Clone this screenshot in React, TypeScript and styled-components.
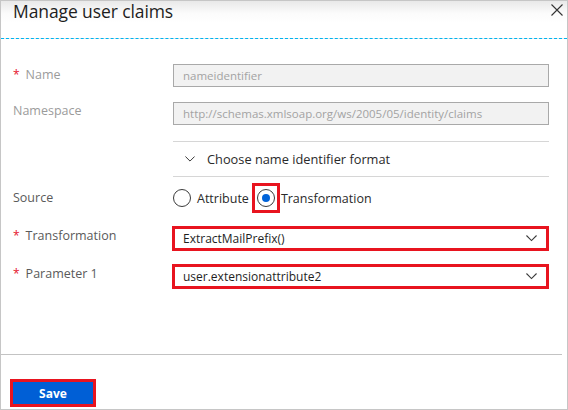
import React from 'react';
import styled, { createGlobalStyle } from 'styled-components';

const GlobalStyle = createGlobalStyle`
  html, body {
    margin: 0;
    padding: 0;
    background: #fff;
  }
  body {
    font-family: 'Open Sans', 'Noto Sans', sans-serif;
    color: #333;
  }
  * {
    box-sizing: border-box;
  }
`;

const Panel = styled.div`
  position: relative;
  width: 568px;
  height: 410px;
  border: 1px solid #c6c6c6;
  display: flex;
  flex-direction: column;
  background: #fff;
  overflow: hidden;
`;

const Header = styled.div`
  height: 38px;
  flex: none;
  padding-left: 12px;
  background: linear-gradient(#e9e9e9 0px, #fbfbfb 12px, #fff 22px);
  border-bottom: 1px dashed #00b4f0;
`;

const Title = styled.h1`
  margin: 0;
  font-size: 17.5px;
  font-weight: 400;
  line-height: 21px;
  color: #1e1e1e;
  letter-spacing: -0.1px;
`;

const CloseButton = styled.button`
  position: absolute;
  top: 2px;
  right: 3px;
  width: 14px;
  height: 14px;
  padding: 0;
  border: none;
  background: none;
  display: flex;
  align-items: center;
  justify-content: center;
  cursor: pointer;
`;

const Body = styled.div`
  flex: 1;
  padding: 25px 18px 0 12px;
  display: flex;
  flex-direction: column;
`;

const Row = styled.div<{ $mt?: number; $h?: number }>`
  display: flex;
  align-items: flex-start;
  margin-top: ${(p) => p.$mt ?? 0}px;
  min-height: ${(p) => p.$h ?? 24}px;
`;

const Label = styled.div<{ $muted?: boolean; $pt?: number }>`
  width: 160px;
  flex: none;
  font-size: 12.5px;
  line-height: 16px;
  padding-top: ${(p) => p.$pt ?? 3}px;
  color: ${(p) => (p.$muted ? '#9b9b9b' : '#5a5a5a')};
`;

const Star = styled.span`
  color: #e5142a;
  margin-right: 6px;
  font-size: 12px;
`;

const Control = styled.div`
  flex: 1;
  display: flex;
  align-items: center;
`;

const ReadOnlyInput = styled.div`
  width: 100%;
  height: 23px;
  border: 1px solid #a9a9a9;
  background: #f2f2f2;
  color: #a3a3a3;
  font-size: 11.5px;
  line-height: 21px;
  padding-left: 9px;
  white-space: nowrap;
`;

const Expander = styled.div`
  width: 100%;
  height: 36px;
  border-top: 1px solid #d6d6d6;
  border-bottom: 1px solid #d6d6d6;
  display: flex;
  align-items: center;
  padding-left: 12px;
  font-size: 12.8px;
  color: #2a2a2a;
  gap: 12px;
`;

const RadioGroup = styled.div`
  display: flex;
  align-items: center;
  height: 30px;
`;

const RadioItem = styled.label`
  display: flex;
  align-items: center;
  font-size: 12.5px;
  color: #2a2a2a;
  gap: 6px;
  margin-right: 7px;
`;

const RadioFrame = styled.span<{ $highlight?: boolean }>`
  display: inline-flex;
  align-items: center;
  justify-content: center;
  width: ${(p) => (p.$highlight ? '28px' : '18px')};
  height: ${(p) => (p.$highlight ? '30px' : '18px')};
  border: ${(p) => (p.$highlight ? '3px solid #e8141f' : 'none')};
  margin-left: ${(p) => (p.$highlight ? '-4px' : '0')};
  margin-right: ${(p) => (p.$highlight ? '-5px' : '0')};
`;

const RadioCircle = styled.span<{ $checked?: boolean }>`
  width: 18px;
  height: 18px;
  border-radius: 50%;
  border: 1px solid #3b3b3b;
  background: #fff;
  display: flex;
  align-items: center;
  justify-content: center;

  &::after {
    content: '';
    width: 8px;
    height: 8px;
    border-radius: 50%;
    background: ${(p) => (p.$checked ? '#0063d9' : 'transparent')};
  }
`;

const Select = styled.div`
  width: calc(100% + 2px);
  margin-left: -1px;
  height: 25px;
  border: 3px solid #e8141f;
  display: flex;
  align-items: center;
  justify-content: space-between;
  padding: 0 9px 0 8px;
  font-size: 12px;
  color: #1e1e1e;
`;

const Footer = styled.div`
  flex: none;
  height: 55px;
  margin-right: 5px;
  border-top: 1px solid #c3c3c3;
  padding: 24px 0 0 9px;
`;

const SaveButton = styled.button`
  width: 86px;
  height: 28px;
  border: 3px solid #e8141f;
  background: #005fd6;
  color: #fff;
  font-family: inherit;
  font-size: 12px;
  font-weight: 700;
  padding: 0;
  cursor: pointer;
`;

const Chevron = ({ size = 11 }: { size?: number }) => (
  <svg width={size} height={size / 2 + 1} viewBox="0 0 12 7" fill="none">
    <path d="M0.5 0.5L6 6L11.5 0.5" stroke="#3a3a3a" strokeWidth="1.2" />
  </svg>
);

const App: React.FC = () => {
  return (
    <>
      <GlobalStyle />
      <Panel>
        <Header>
          <Title>Manage user claims</Title>
          <CloseButton aria-label="Close">
            <svg width="12" height="12" viewBox="0 0 12 12">
              <path d="M0.5 0.5L11.5 11.5M11.5 0.5L0.5 11.5" stroke="#333" strokeWidth="1.1" />
            </svg>
          </CloseButton>
        </Header>
        <Body>
          <Row>
            <Label $muted>
              <Star>*</Star>Name
            </Label>
            <Control>
              <ReadOnlyInput>nameidentifier</ReadOnlyInput>
            </Control>
          </Row>
          <Row $mt={14}>
            <Label $muted $pt={1}>Namespace</Label>
            <Control>
              <ReadOnlyInput>http://schemas.xmlsoap.org/ws/2005/05/identity/claims</ReadOnlyInput>
            </Control>
          </Row>
          <Row $mt={15}>
            <Label />
            <Control>
              <Expander>
                <Chevron size={10} />
                Choose name identifier format
              </Expander>
            </Control>
          </Row>
          <Row $mt={6} $h={30}>
            <Label $pt={7}>Source</Label>
            <Control>
              <RadioGroup>
                <RadioItem>
                  <RadioCircle />
                  Attribute
                </RadioItem>
                <RadioItem>
                  <RadioFrame $highlight>
                    <RadioCircle $checked />
                  </RadioFrame>
                  Transformation
                </RadioItem>
              </RadioGroup>
            </Control>
          </Row>
          <Row $mt={13}>
            <Label $pt={2}>
              <Star>*</Star>Transformation
            </Label>
            <Control>
              <Select>
                ExtractMailPrefix()
                <Chevron />
              </Select>
            </Control>
          </Row>
          <Row $mt={13}>
            <Label $pt={2}>
              <Star>*</Star>Parameter 1
            </Label>
            <Control>
              <Select>
                user.extensionattribute2
                <Chevron />
              </Select>
            </Control>
          </Row>
        </Body>
        <Footer>
          <SaveButton>Save</SaveButton>
        </Footer>
      </Panel>
    </>
  );
};

export default App;
